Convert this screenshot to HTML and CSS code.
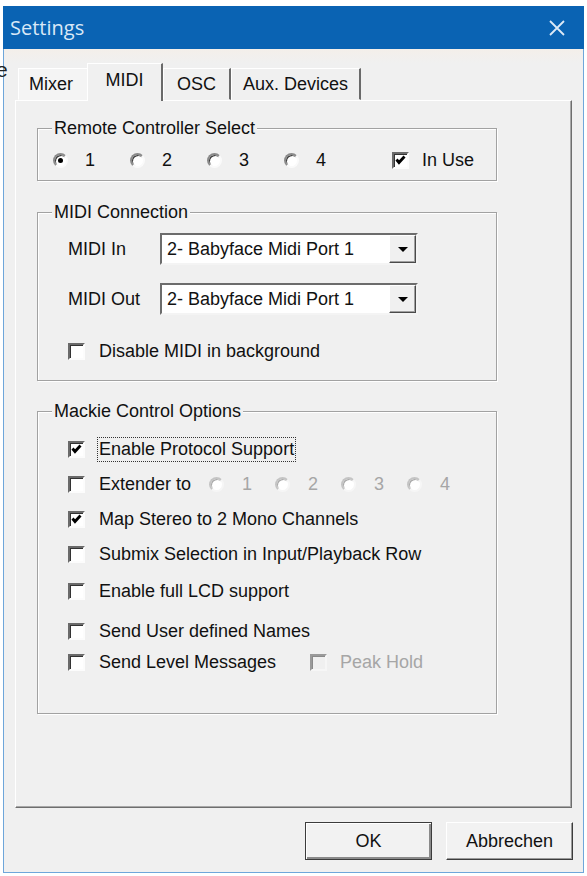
FILE: index.html
```html
<!DOCTYPE html>
<html lang="de">
<head>
    <meta charset="UTF-8">
    <meta name="viewport" content="width=device-width, initial-scale=1.0">
    <title>Settings</title>
    <link rel="stylesheet" href="styles.css">
</head>
<body>
    <span class="stray-glyph">e</span>

    <div class="dialog">
        <div class="titlebar">
            <span class="title">Settings</span>
            <svg class="close" width="18" height="16" viewBox="0 0 18 16">
                <path d="M2 1 L16 15 M16 1 L2 15" stroke="#dde9f6" stroke-width="1.8" fill="none"/>
            </svg>
        </div>

        <div class="tabs">
            <div class="tab tab-mixer">Mixer</div>
            <div class="tab tab-midi active">MIDI</div>
            <div class="tab tab-osc">OSC</div>
            <div class="tab tab-aux">Aux. Devices</div>
        </div>

        <div class="page">
            <!-- remote controller -->
            <div class="group group-remote">
                <div class="group-title">Remote Controller Select</div>
                <div class="opt-row remote-row">
                    <label class="opt opt-radio"><span class="radio on"></span>1</label>
                    <label class="opt opt-radio"><span class="radio"></span>2</label>
                    <label class="opt opt-radio"><span class="radio"></span>3</label>
                    <label class="opt opt-radio"><span class="radio"></span>4</label>
                    <label class="opt opt-inuse">
                        <span class="check"><svg width="13" height="13" viewBox="0 0 13 13"><path d="M2.5 5.5 L5 8.5 L10.5 2.5" stroke="#000" stroke-width="2.8" fill="none"/></svg></span>
                        In Use
                    </label>
                </div>
            </div>

            <!-- midi ports -->
            <div class="group group-midi">
                <div class="group-title">MIDI Connection</div>
                <div class="field-row first">
                    <span class="field-label">MIDI In</span>
                    <div class="combo">
                        <span class="combo-text">2- Babyface Midi Port 1</span>
                        <span class="combo-btn"><span class="arrow"></span></span>
                    </div>
                </div>
                <div class="field-row second">
                    <span class="field-label">MIDI Out</span>
                    <div class="combo">
                        <span class="combo-text">2- Babyface Midi Port 1</span>
                        <span class="combo-btn"><span class="arrow"></span></span>
                    </div>
                </div>
                <div class="opt-row bg-row">
                    <label class="opt"><span class="check"></span>Disable MIDI in background</label>
                </div>
            </div>

            <!-- mackie protocol -->
            <div class="group group-mackie">
                <div class="group-title">Mackie Control Options</div>
                <div class="opt-row mk-1">
                    <label class="opt">
                        <span class="check"><svg width="13" height="13" viewBox="0 0 13 13"><path d="M2.5 5.5 L5 8.5 L10.5 2.5" stroke="#000" stroke-width="2.8" fill="none"/></svg></span>
                        <span class="focus">Enable Protocol Support</span>
                    </label>
                </div>
                <div class="opt-row mk-2">
                    <label class="opt"><span class="check"></span><span class="ext-label">Extender to</span></label>
                    <span class="opt opt-ext disabled"><span class="radio"></span>1</span>
                    <span class="opt opt-ext disabled"><span class="radio"></span>2</span>
                    <span class="opt opt-ext disabled"><span class="radio"></span>3</span>
                    <span class="opt opt-ext disabled"><span class="radio"></span>4</span>
                </div>
                <div class="opt-row mk-3">
                    <label class="opt">
                        <span class="check"><svg width="13" height="13" viewBox="0 0 13 13"><path d="M2.5 5.5 L5 8.5 L10.5 2.5" stroke="#000" stroke-width="2.8" fill="none"/></svg></span>
                        Map Stereo to 2 Mono Channels
                    </label>
                </div>
                <div class="opt-row mk-4">
                    <label class="opt"><span class="check"></span>Submix Selection in Input/Playback Row</label>
                </div>
                <div class="opt-row mk-5">
                    <label class="opt"><span class="check"></span>Enable full LCD support</label>
                </div>
                <div class="opt-row mk-6">
                    <label class="opt"><span class="check"></span>Send User defined Names</label>
                </div>
                <div class="opt-row mk-7">
                    <label class="opt"><span class="check"></span><span class="level-label">Send Level Messages</span></label>
                    <span class="opt disabled"><span class="check"></span>Peak Hold</span>
                </div>
            </div>
        </div>

        <div class="buttons">
            <button class="btn btn-default">OK</button>
            <button class="btn">Abbrechen</button>
        </div>
    </div>
</body>
</html>
```

FILE: styles.css
```css
* {
    box-sizing: border-box;
    margin: 0;
    padding: 0;
}

body {
    position: relative;
    width: 587px;
    height: 876px;
    overflow: hidden;
    background: #fff;
    font-family: "Liberation Sans", Arial, sans-serif;
    font-size: 18px;
    color: #111;
}

.stray-glyph {
    position: absolute;
    left: -4px;
    top: 59px;
    font-size: 21px;
    line-height: 1;
    color: #222;
}

/* window frame */
.dialog {
    display: flex;
    flex-direction: column;
    width: 581px;
    height: 867px;
    margin: 6px 0 0 3px;
    background: #f0f0f0;
    border: 1px solid #6ea6da;
    border-top: none;
}

.titlebar {
    display: flex;
    align-items: center;
    justify-content: space-between;
    height: 43px;
    margin: 0 -1px;
    padding: 0 18px 0 7px;
    background: #0a63b3;
}

.title {
    font-family: "Open Sans", "Noto Sans", sans-serif;
    font-size: 20px;
    color: #d9e8f7;
}

.close {
    display: block;
}

/* tab strip */
.tabs {
    display: flex;
    align-items: flex-end;
    height: 51px;
    padding-left: 14px;
    background: linear-gradient(#f4efea, #f0f0f0 14px);
}

.tab {
    height: 32px;
    line-height: 30px;
    text-align: center;
    background: #f0f0f0;
    border: 1px solid;
    border-right-width: 2px;
    border-color: #fff #6a6a6a transparent #fff;
}

.tab-mixer {
    width: 71px;
    background: #f4f4f4;
    border-right-color: transparent;
    padding-right: 4px;
}

.tab-midi {
    width: 76px;
}

.tab-osc {
    width: 68px;
}

.tab-aux {
    width: 130px;
}

.tab.active {
    position: relative;
    z-index: 1;
    height: 38px;
    line-height: 32px;
    margin: 0 0 -1px -2px;
    border-bottom: none;
}

/* tab page */
.page {
    height: 708px;
    margin: 0 11px;
    border: 1px solid;
    border-color: #fff #6e6e6e #6e6e6e #fff;
    box-shadow: inset -1px -1px #a8a8a8;
}

.group {
    width: 460px;
    margin-left: 21px;
    border: 1px solid #a2a2a2;
    box-shadow: inset 1px 1px #fff, 1px 1px #fff;
}

.group-remote {
    height: 53px;
    margin-top: 27px;
}

.group-midi {
    height: 169px;
    margin-top: 31px;
}

.group-mackie {
    height: 303px;
    margin-top: 30px;
}

.group-title {
    width: fit-content;
    margin: -11px 0 0 14px;
    padding: 0 2px;
    line-height: 20px;
    background: #f0f0f0;
}

/* option rows */
.opt-row {
    display: flex;
    align-items: center;
    height: 20px;
    padding-left: 30px;
}

.opt {
    display: flex;
    align-items: center;
    gap: 14px;
    white-space: nowrap;
}

.remote-row {
    margin-top: 12px;
    padding-left: 15px;
}

.opt-radio {
    width: 77px;
    gap: 17px;
}

.opt-inuse {
    margin-left: 31px;
    gap: 13px;
}

.radio {
    display: inline-flex;
    align-items: center;
    justify-content: center;
    flex: none;
    width: 15px;
    height: 15px;
    border-radius: 50%;
    background: #fff;
    border: 2px solid;
    border-color: #8a8a8a #fafafa #fafafa #8a8a8a;
    box-shadow: inset 1px 1px #3a3a3a;
}

.radio.on::after {
    content: "";
    width: 5px;
    height: 5px;
    border-radius: 50%;
    background: #000;
}

.check {
    display: inline-flex;
    align-items: center;
    justify-content: center;
    flex: none;
    width: 17px;
    height: 17px;
    background: #fff;
    border: 2px solid;
    border-color: #6a6a6a #fcfcfc #fcfcfc #6a6a6a;
    box-shadow: inset 1px 1px #333;
}

.check svg {
    display: block;
}

.disabled {
    color: #a6a6a6;
}

.disabled .radio {
    border-color: #c4c4c4 #f6f6f6 #f6f6f6 #c4c4c4;
    box-shadow: inset 1px 1px #a8a8a8;
}

.disabled .check {
    background: #f0f0f0;
    border-color: #9a9a9a #f6f6f6 #f6f6f6 #9a9a9a;
    box-shadow: inset 1px 1px #8a8a8a;
}

.focus {
    outline: 1px dotted #333;
    outline-offset: 1px;
}

/* midi connection */
.field-row {
    display: flex;
    align-items: center;
    padding-left: 30px;
}

.field-row.first {
    margin-top: 11px;
}

.field-row.second {
    margin-top: 18px;
}

.field-label {
    width: 92px;
}

.combo {
    display: flex;
    align-items: center;
    justify-content: space-between;
    width: 258px;
    height: 32px;
    background: #fff;
    border: 2px solid;
    border-color: #6c6c6c #f4f4f4 #f4f4f4 #6c6c6c;
}

.combo-text {
    padding-left: 5px;
}

.combo-btn {
    display: flex;
    align-items: center;
    justify-content: center;
    width: 27px;
    height: 28px;
    background: #f0f0f0;
    border: 1px solid;
    border-color: #fff #4a4a4a #4a4a4a #fff;
    box-shadow: inset -1px -1px #a0a0a0;
}

.arrow {
    width: 0;
    height: 0;
    border-left: 5px solid transparent;
    border-right: 5px solid transparent;
    border-top: 5px solid #000;
}

.bg-row {
    margin-top: 26px;
}

/* mackie rows */
.mk-1 { margin-top: 18px; }
.mk-2 { margin-top: 15px; }
.mk-3 { margin-top: 15px; }
.mk-4 { margin-top: 15px; }
.mk-5 { margin-top: 17px; }
.mk-6 { margin-top: 20px; }
.mk-7 { margin-top: 11px; }

.ext-label {
    width: 110px;
}

.opt-ext {
    width: 66px;
    gap: 18px;
}

.level-label {
    width: 211px;
}

.mk-7 .disabled {
    gap: 13px;
}

/* dialog buttons */
.buttons {
    display: flex;
    justify-content: flex-end;
    gap: 14px;
    margin-top: 14px;
    padding-right: 10px;
}

.btn {
    width: 127px;
    height: 38px;
    font-family: "Liberation Sans", Arial, sans-serif;
    font-size: 18px;
    color: #111;
    background: #f2f2f2;
    border: 1px solid;
    border-color: #fff #3c3c3c #3c3c3c #fff;
    box-shadow: inset -1px -1px #9a9a9a;
}

.btn-default {
    border-color: #3c3c3c;
    box-shadow: inset 1px 1px #fff, inset -2px -2px #8a8a8a;
}
```
